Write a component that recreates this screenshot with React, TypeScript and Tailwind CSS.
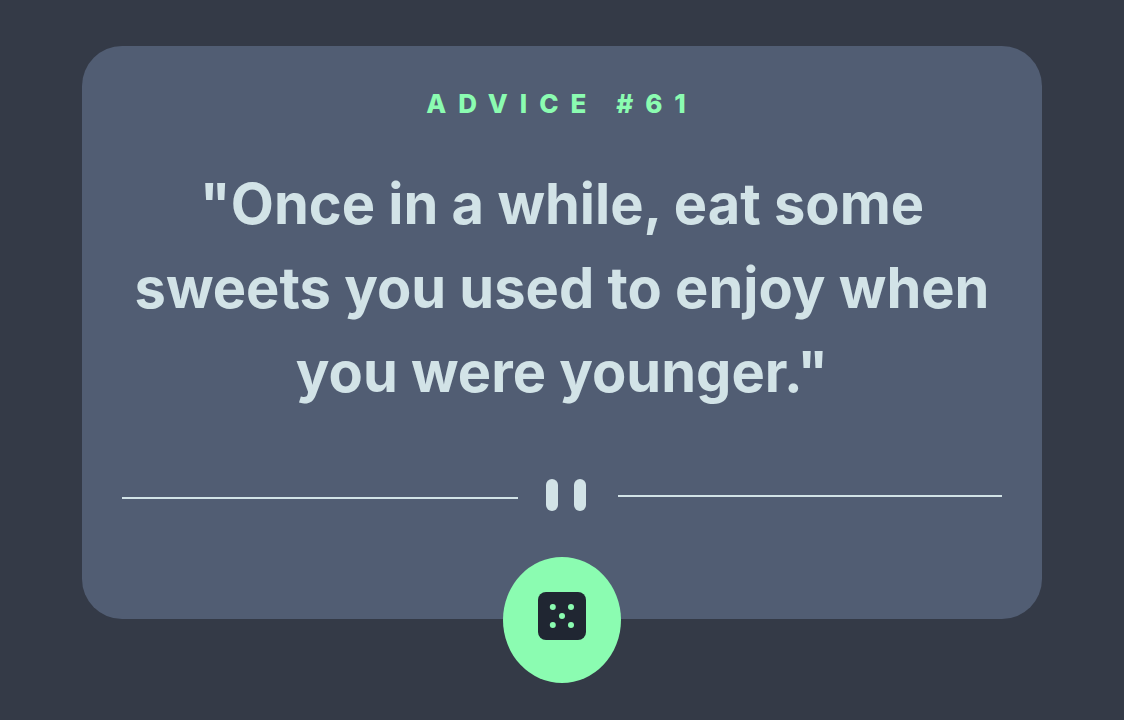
function Divider() {
  return (
    <div className="mt-[65px] flex w-full items-start" aria-hidden="true">
      <span className="mt-[18px] h-[2px] grow basis-[396px] bg-[#d2e3e7]" />
      <span className="ml-7 mr-8 flex shrink-0 gap-4">
        <span className="h-8 w-3 rounded-full bg-[#d2e3e7]" />
        <span className="h-8 w-3 rounded-full bg-[#d2e3e7]" />
      </span>
      <span className="mt-4 h-[2px] grow basis-[384px] bg-[#d2e3e7]" />
    </div>
  );
}

function DiceIcon() {
  return (
    <svg viewBox="0 0 24 24" className="size-12" aria-hidden="true">
      <rect width="24" height="24" rx="4" fill="#202632" />
      <g fill="#8bfcb1">
        <circle cx="7.4" cy="7.5" r="1.5" />
        <circle cx="16.5" cy="7.5" r="1.5" />
        <circle cx="12" cy="12" r="1.5" />
        <circle cx="7.4" cy="16.5" r="1.5" />
        <circle cx="16.5" cy="16.5" r="1.5" />
      </g>
    </svg>
  );
}

export default function App() {
  return (
    <main className="flex min-h-screen flex-col items-center bg-[#343a47] px-4 pt-[46px] font-['Inter',sans-serif]">
      <section className="flex w-full max-w-[960px] flex-col items-center rounded-[40px] bg-[#515d73] px-10 pt-10 text-center">
        <h1 className="text-[26px] leading-9 font-extrabold tracking-[12px] text-[#8bfcb1] uppercase">Advice #61</h1>
        <p className="mt-10 text-[56px] leading-[84px] font-bold text-[#d2e3e7]">
          "Once in a while, eat some sweets you used to enjoy when you were younger."
        </p>
        <Divider />
        <button
          type="button"
          aria-label="New advice"
          className="mt-[46px] -mb-16 cursor-pointer rounded-[50%] bg-[#8bfcb1] px-[35px] pt-[35px] pb-[43px]"
        >
          <DiceIcon />
        </button>
      </section>
    </main>
  );
}
